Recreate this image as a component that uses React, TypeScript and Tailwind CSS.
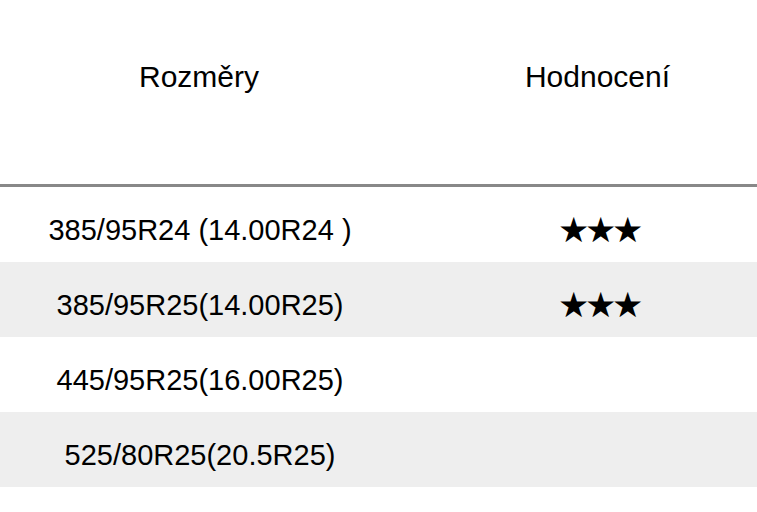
const rows = [
  { size: '385/95R24 (14.00R24 )', rating: '★★★' },
  { size: '385/95R25(14.00R25)', rating: '★★★' },
  { size: '445/95R25(16.00R25)', rating: '' },
  { size: '525/80R25(20.5R25)', rating: '' },
];

export default function App() {
  return (
    <div className="w-[757px] h-[512px] bg-white text-black overflow-hidden font-['Liberation_Sans',Arial,sans-serif]">
      <div className="flex h-[184px] items-start pt-[54px] text-[30px] leading-[45px]">
        <div className="w-[398px] text-center">Rozměry</div>
        <div className="flex-1 pl-[40px] text-center">Hodnocení</div>
      </div>
      <div className="h-[3px] bg-[#888888]" />
      {rows.map((row, i) => (
        <div
          key={row.size}
          className={`flex h-[75px] items-center pt-[12px] text-[29px] ${i % 2 === 1 ? 'bg-[#eeeeee]' : 'bg-white'}`}
        >
          <div className="w-[400px] text-center">{row.size}</div>
          <div className="flex-1 pl-[40px] text-center text-[35px] tracking-[-4px]">{row.rating}</div>
        </div>
      ))}
    </div>
  );
}
